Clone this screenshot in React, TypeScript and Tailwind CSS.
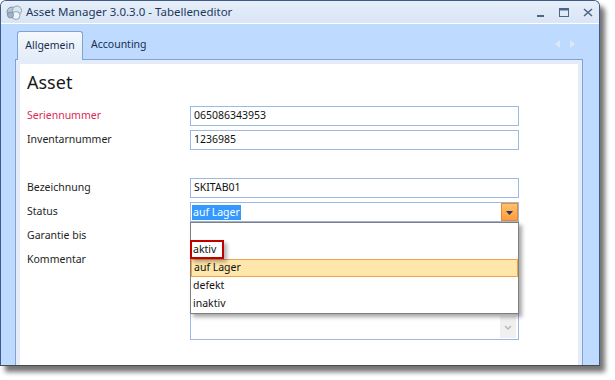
import React from "react";

const labelCls = "h-[20px] flex items-center text-[10.5px] text-[#1e1e1e]";
const inputCls =
  "h-[20px] w-[329px] border border-[#9cb9e3] bg-white flex items-center pl-[3px] text-[10.5px] text-[#111]";

const WindowIcon = () => (
  <svg width="17" height="15" viewBox="0 0 17 15">
    <circle cx="6" cy="7" r="5" fill="#b9c6d6" stroke="#6f8199" strokeWidth="0.8" />
    <circle cx="11" cy="5.5" r="4.5" fill="#d7e4f2" stroke="#7e90a8" strokeWidth="0.8" />
    <circle cx="10" cy="10.5" r="4" fill="#eef3f9" stroke="#7e90a8" strokeWidth="0.8" />
    <circle cx="4.5" cy="10" r="3" fill="#9fb3c9" stroke="#6f8199" strokeWidth="0.7" />
  </svg>
);

const WindowControls = () => (
  <div className="flex items-center gap-[14px] pr-[6px]">
    <svg width="9" height="9" viewBox="0 0 9 9">
      <rect x="1" y="7" width="7" height="2" fill="#4f6486" />
    </svg>
    <svg width="10" height="9" viewBox="0 0 10 9">
      <rect x="0.5" y="0.5" width="9" height="8" fill="none" stroke="#4f6486" />
      <rect x="0.5" y="0.5" width="9" height="2" fill="#4f6486" />
    </svg>
    <svg width="10" height="9" viewBox="0 0 10 9">
      <path d="M1 1 L9 8 M9 1 L1 8" stroke="#4f6486" strokeWidth="1.6" />
    </svg>
  </div>
);

const Row: React.FC<{ label: string; red?: boolean; children?: React.ReactNode }> = ({
  label,
  red,
  children,
}) => (
  <div className="flex h-[24px]">
    <div className={`${labelCls} w-[163px] ${red ? "!text-[#dc2a52]" : ""}`}>{label}</div>
    {children}
  </div>
);

export default function App() {
  return (
    <div className="w-[615px] h-[380px] bg-white font-['Noto_Sans',sans-serif]">
      <div className="w-[600px] h-[366px] flex flex-col rounded-t-[6px] border border-[#3e5a86] border-b-[#4a4a4a] bg-[#bfdaff] overflow-hidden shadow-[5px_6px_5px_rgba(0,0,0,0.55)]">
        {/* title bar */}
        <div className="h-[23px] flex items-center border-b border-white bg-gradient-to-b from-[#e6eef9] to-[#d9e6f6]">
          <div className="pl-[5px] pr-[3px] flex items-center">
            <WindowIcon />
          </div>
          <div className="text-[11.5px] text-[#1e395b] leading-none">
            Asset Manager 3.0.3.0 - Tabelleneditor
          </div>
          <div className="ml-auto">
            <WindowControls />
          </div>
        </div>

        <div className="flex-1 flex flex-col pl-[14px] pr-[16px]">
          {/* tabs */}
          <div className="h-[35px] flex items-end pl-[2px]">
            <div className="h-[29px] w-[66px] -mb-px relative z-10 flex items-center justify-center rounded-t-[3px] border border-b-0 border-[#7ea3d4] bg-gradient-to-b from-[#f5f8fd] to-[#e3ecf8] text-[10.5px] text-[#15304f]">
              Allgemein
            </div>
            <div className="h-[29px] pl-[8px] flex items-center text-[10.5px] text-[#15304f]">
              Accounting
            </div>
            <div className="ml-auto mb-[11px] mr-[8px] flex gap-[10px]">
              <svg width="5" height="8" viewBox="0 0 5 8">
                <path d="M5 0 L0 4 L5 8 Z" fill="#dbe8f8" />
              </svg>
              <svg width="5" height="8" viewBox="0 0 5 8">
                <path d="M0 0 L5 4 L0 8 Z" fill="#dbe8f8" />
              </svg>
            </div>
          </div>

          {/* panel */}
          <div className="flex-1 flex flex-col border border-b-0 border-[#7ea3d4] bg-[#e3ecf8] pt-[4px] px-[4px]">
            <div className="flex-1 bg-white pl-[7px] pt-[4px] relative">
              <div className="h-[28px] flex items-center text-[18px] text-[#1a1a1a]">Asset</div>
              <div className="mt-[10px] flex flex-col">
                <Row label="Seriennummer" red>
                  <div className={inputCls}>065086343953</div>
                </Row>
                <Row label="Inventarnummer">
                  <div className={inputCls}>1236985</div>
                </Row>
                <div className="h-[24px]" />
                <Row label="Bezeichnung">
                  <div className={inputCls}>SKITAB01</div>
                </Row>
                <Row label="Status">
                  <div className={`${inputCls} !pl-[1px] pr-0`}>
                    <span className="bg-[#3399ff] text-white px-[1px] leading-[15px]">auf Lager</span>
                    <div className="ml-auto h-[18px] w-[17px] flex items-center justify-center border border-[#e8892e] bg-gradient-to-b from-[#ffc16c] to-[#ff9c3a]">
                      <svg width="7" height="5" viewBox="0 0 7 5">
                        <path d="M0 1 L7 1 L3.5 5 Z" fill="#1e3a6a" />
                      </svg>
                    </div>
                  </div>
                </Row>
                <Row label="Garantie bis">
                  <div className={inputCls} />
                </Row>
                <div className="flex">
                  <div className={`${labelCls} w-[163px]`}>Kommentar</div>
                  <div className="h-[90px] w-[329px] border border-[#9cb9e3] bg-white flex items-end justify-end pr-[2px] pb-[1px]">
                    <div className="w-[16px] h-[22px] bg-[#f0f0f0] flex items-center justify-center">
                      <svg width="8" height="5" viewBox="0 0 8 5">
                        <path d="M1 1 L4 4 L7 1" fill="none" stroke="#b8b8b8" strokeWidth="1.5" />
                      </svg>
                    </div>
                  </div>
                </div>
              </div>

              {/* dropdown popup */}
              <div className="absolute left-[170px] top-[158px] w-[329px] h-[92px] border border-[#7f7f7f] bg-white shadow-[3px_3px_4px_rgba(0,0,0,0.35)] text-[10.5px] text-[#111] flex flex-col">
                <div className="h-[18px]" />
                <div className="h-[18px] flex items-center pl-[2px]">aktiv</div>
                <div className="h-[18px] flex items-center pl-[2px] border border-[#f6a24a] bg-[#ffe6ab]">auf Lager</div>
                <div className="h-[18px] flex items-center pl-[2px]">defekt</div>
                <div className="h-[18px] flex items-center pl-[2px]">inaktiv</div>
              </div>
              {/* annotation */}
              <div className="absolute left-[170px] top-[176px] w-[34px] h-[19px] border-2 border-[#c00000] shadow-[3px_3px_4px_rgba(0,0,0,0.3)]" />
            </div>
          </div>
        </div>
      </div>
    </div>
  );
}
